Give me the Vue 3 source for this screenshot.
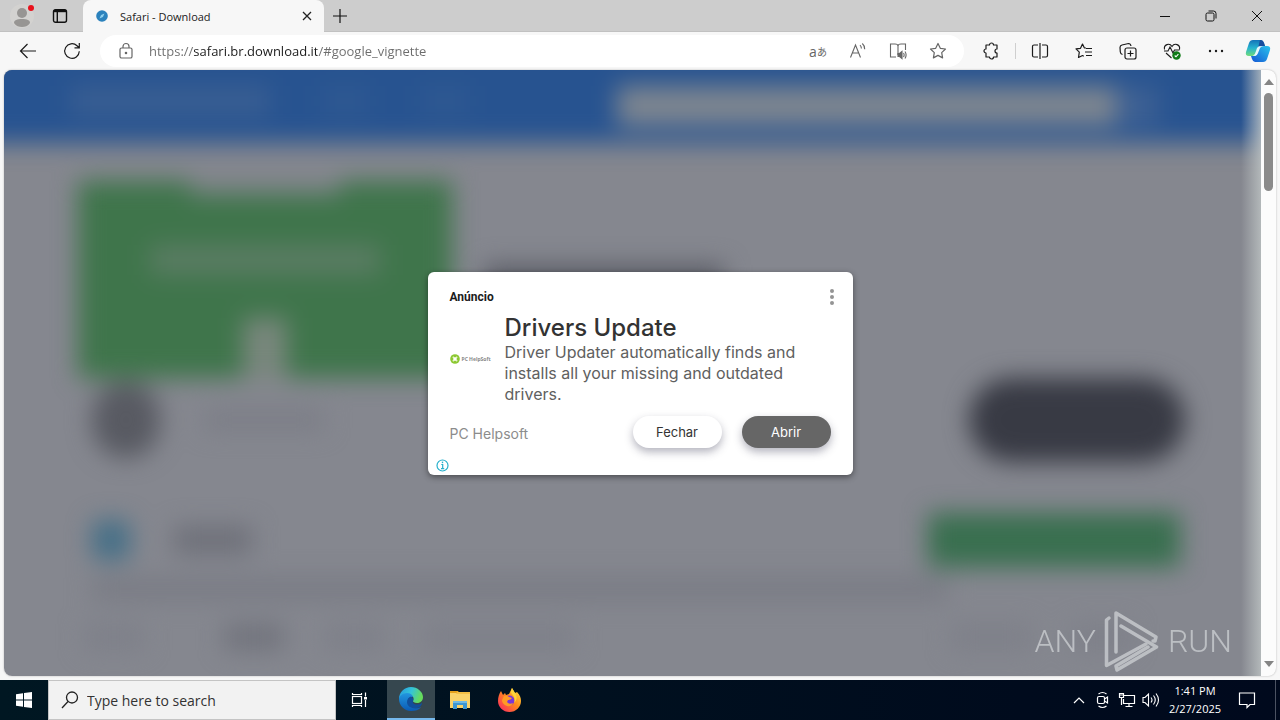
<script setup>
import { ref } from 'vue'

const url = ref('https://safari.br.download.it/#google_vignette')
const query = ref('')
</script>

<template>
  <div class="desktop">
    <header class="tabs">
      <button class="profile" aria-label="Profile">
        <svg width="30" height="30" viewBox="0 0 30 30"><circle cx="15" cy="15" r="12" fill="#d3d2d0" /><circle cx="15" cy="12" r="5" fill="#979593" /><path d="M7 22c0-3 3-4 8-4s8 1 8 4c-2 3-5 4-8 4s-6-1-8-4z" fill="#979593" /><circle cx="24" cy="7" r="3" fill="#e8111c" /></svg>
      </button>
      <button class="workspace" aria-label="Tab actions">
        <svg width="16" height="16" viewBox="0 0 16 16" fill="none" stroke="#111" stroke-width="1.4"><rect x="1.500" y="1.700" width="13" height="12.600" rx="2" /><path d="M2 3h12" stroke-width="2.400" /><path d="M5.300 4v10" /></svg>
      </button>
      <div class="tab">
        <svg width="12" height="12" viewBox="0 0 12 12"><circle cx="6" cy="6" r="5.800" fill="#2b82bd" /><path d="M3.500 8.500l1.600-3.400 3.400-1.600-1.600 3.400z" fill="#8fd0ee" /></svg>
        <span class="tab-title">Safari - Download</span>
        <button class="tab-close" aria-label="Close tab"><svg width="10" height="10" viewBox="0 0 10 10" stroke="#222" stroke-width="1.300"><path d="M1 1l8 8M9 1l-8 8" /></svg></button>
      </div>
      <button class="new-tab" aria-label="New tab"><svg width="16" height="16" viewBox="0 0 16 16" stroke="#111" stroke-width="1.200"><path d="M8 1v14M1 8h14" /></svg></button>
      <div class="window-controls">
        <button aria-label="Minimize"><svg width="12" height="12" viewBox="0 0 12 12" stroke="#111"><path d="M1 6.500h10" /></svg></button>
        <button aria-label="Restore"><svg width="12" height="12" viewBox="0 0 12 12" fill="none" stroke="#111"><rect x="1" y="3" width="8" height="8" rx="1.500" /><path d="M3.500 1h5A2.500 2.500 0 0 1 11 3.500v5" /></svg></button>
        <button aria-label="Close"><svg width="12" height="12" viewBox="0 0 12 12" stroke="#111"><path d="M1 1l10 10M11 1l-10 10" /></svg></button>
      </div>
    </header>

    <nav class="toolbar">
      <button class="tool" aria-label="Back"><svg width="20" height="20" viewBox="0 0 20 20" fill="none" stroke="#1b1b1b" stroke-width="1.200"><path d="M18 10H2.500M9.500 3l-7 7 7 7" /></svg></button>
      <button class="tool" aria-label="Refresh"><svg width="20" height="20" viewBox="0 0 20 20" fill="none" stroke="#1b1b1b" stroke-width="1.200"><path d="M17.300 10.300a7.300 7.300 0 1 1-2.300-5.600l2 1.900M17.300 2v4.800h-4.800" /></svg></button>
      <div class="address">
        <button class="lock" aria-label="Site information"><svg width="16" height="18" viewBox="0 0 16 18" fill="none" stroke="#666" stroke-width="1.200"><rect x="2" y="6" width="12" height="10" rx="1.600" /><path d="M5 6V4.500a3 3 0 0 1 6 0V6" /><circle cx="8" cy="11" r=".7" fill="#666" /></svg></button>
        <input v-model="url" class="url" type="text" aria-label="Address" spellcheck="false" />
        <button class="small-tool glyphs" aria-label="Translate"><span>a</span><span class="kana">あ</span></button>
        <button class="small-tool" aria-label="Read aloud"><svg width="18" height="18" viewBox="0 0 18 18" fill="none" stroke="#666" stroke-width="1.100"><path d="M1.500 15.500L6.500 3l5 12.500M3.300 11h6.500M11 3.200c1 .9 1.400 2 1.400 3.300M13.300 1.500c1.800 1.600 2.600 3.300 2.400 5.800" /></svg></button>
        <button class="small-tool" aria-label="Immersive reader"><svg width="18" height="18" viewBox="0 0 18 18" fill="none" stroke="#666" stroke-width="1.100"><path d="M7 15H1.500V2H6q3 0 3 2v9M9 4q0-2 3-2h4.500v6" /><path d="M9 11.500h1.500L13 9.500v7l-2.500-2H9z" fill="#666" /><path d="M14.500 11q1.300 2 0 4M16 9.500q2.200 3.500 0 7" /></svg></button>
        <button class="small-tool" aria-label="Favorite"><svg width="18" height="18" viewBox="0 0 18 18" fill="none" stroke="#666" stroke-width="1.200" stroke-linejoin="round"><path d="M9 1.500l2.300 4.800 5.200.7-3.800 3.600.9 5.300L9 13.400l-4.600 2.500.9-5.300L1.500 7l5.200-.7z" /></svg></button>
      </div>
      <button class="tool ext" aria-label="Extensions"><svg width="18" height="18" viewBox="0 0 18 18" fill="none" stroke="#1b1b1b" stroke-width="1.200" stroke-linejoin="round"><path d="M4 3h3.500a2 2 0 0 1 4 0H15v4a2 2 0 0 0 0 4v4h-3.500a2 2 0 0 1-4 0H4v-4a2 2 0 1 1 0-4z" /></svg></button>
      <span class="divider"></span>
      <button class="tool" aria-label="Split screen"><svg width="18" height="18" viewBox="0 0 18 18" fill="none" stroke="#1b1b1b" stroke-width="1.200"><path d="M9 1v16M7 3H3a1.500 1.500 0 0 0-1.500 1.500v9A1.500 1.500 0 0 0 3 15h4M11 3h4a1.500 1.500 0 0 1 1.500 1.500v9A1.500 1.500 0 0 1 15 15h-4" /></svg></button>
      <button class="tool" aria-label="Favorites"><svg width="18" height="18" viewBox="0 0 18 18" fill="none" stroke="#1b1b1b" stroke-width="1.200" stroke-linejoin="round"><path d="M11 6L9.300 5.800 7.500 2 5.500 6.300l-4.500.6 3.300 3.200-.8 5.400 4-2 1.300.7M11 6.500h6M10 10h7M11 13.500h6" /></svg></button>
      <button class="tool" aria-label="Collections"><svg width="18" height="18" viewBox="0 0 18 18" fill="none" stroke="#1b1b1b" stroke-width="1.200"><path d="M3.500 12.500Q1.500 12 1.300 10L1 5.500Q1 3.500 3 3l6.500-1.500q2 0 2.500 2.500" /><rect x="6" y="6" width="11" height="11" rx="2" /><path d="M11.500 8.500v6M8.500 11.500h6" /></svg></button>
      <button class="tool" aria-label="Browser essentials"><svg width="18" height="18" viewBox="0 0 18 18" fill="none" stroke="#1b1b1b" stroke-width="1.100"><path d="M1.500 7.500c-1-5 5-7 7.500-3 2.500-4 8.500-2 7.500 3M3 11l5.500 5M1 9h4l2-4 3 6 1.500-3h5" /><circle cx="13.500" cy="13.500" r="4.200" fill="#0f7b16" stroke="none" /><path d="M11.700 13.500l1.300 1.300 2.400-2.600" stroke="#fff" /></svg></button>
      <button class="tool" aria-label="More"><svg width="18" height="18" viewBox="0 0 18 18" fill="#1b1b1b"><circle cx="3" cy="9" r="1.200" /><circle cx="9" cy="9" r="1.200" /><circle cx="15" cy="9" r="1.200" /></svg></button>
      <button class="copilot" aria-label="Copilot">
        <svg width="26" height="24" viewBox="0 0 26 24">
          <defs><linearGradient id="cpA" x1="0" y1="0" x2="0" y2="1"><stop offset="0" stop-color="#1473b8" /><stop offset=".5" stop-color="#26b3d0" /><stop offset="1" stop-color="#70dc7a" /></linearGradient><linearGradient id="cpB" x1="1" y1="0" x2="0" y2="1"><stop offset="0" stop-color="#29c4ed" /><stop offset="1" stop-color="#1557d4" /></linearGradient></defs>
          <path d="M8 1h8q2 0 3 3l1 3h-4q-2 0-3 3l-2 5q-1 2-4 2H4q-4 0-3-4L4 4q1-3 4-3z" fill="url(#cpA)" />
          <path d="M18 23h-8q-2 0-3-3l-1-3h4q2 0 3-3l2-5q1-2 4-2h3q4 0 3 4l-3 9q-1 3-4 3z" fill="url(#cpB)" />
          <path d="M15 1q3 0 4 3l1 3h-4q-2 0-3 2z" fill="#174d9e" />
          <path d="M12 9q1-2 4-2-2 1-3 5l-1 3q-1 2-4 2 2-1 3-5z" fill="#e5faff" />
        </svg>
      </button>
    </nav>

    <main class="viewport">
      <div class="page">
        <div class="site">
          <div class="site-head"><span class="brand"></span><span class="menu"></span><span class="menu"></span><span class="site-search"></span><span class="submit"></span></div>
          <div class="hero">
            <div class="banner"><span class="banner-top"></span><span class="banner-text"></span><span class="banner-arrow"></span></div>
            <div class="headline"></div>
          </div>
          <div class="promo"><span class="avatar"></span><span class="caption"></span><span class="pill"></span></div>
          <div class="product"><span class="app-icon"></span><span class="app-name"></span><span class="get"></span></div>
          <div class="summary"></div>
          <div class="facts"><span></span><span class="strong"></span><span></span><span class="wide"></span><span class="push"></span><span></span></div>
        </div>
      </div>
      <div class="scroll">
        <svg width="10" height="6" viewBox="0 0 10 6"><path d="M5 0l5 6H0z" fill="#858585" /></svg>
        <span class="thumb"></span>
        <svg width="10" height="6" viewBox="0 0 10 6"><path d="M5 6L0 0h10z" fill="#858585" /></svg>
      </div>

      <div class="vignette">
        <article class="ad">
          <div class="ad-top">
            <span>Anúncio</span>
            <button class="ad-menu" aria-label="Ad options"><svg width="6" height="16" viewBox="0 0 6 16" fill="#949494"><circle cx="3" cy="2" r="2" /><circle cx="3" cy="8" r="2" /><circle cx="3" cy="14" r="2" /></svg></button>
          </div>
          <div class="ad-body">
            <div class="ad-logo"><svg width="10" height="10" viewBox="0 0 10 10"><circle cx="5" cy="5" r="4.800" fill="#8cc832" /><path d="M2.800 2.800l4.400 4.400M7.200 2.800L2.800 7.200" stroke="#e6f5c8" stroke-width="1.500" /><circle cx="5" cy="5" r="1.700" fill="#fff" /></svg><span>PC HelpSoft</span></div>
            <div>
              <h1>Drivers Update</h1>
              <p>Driver Updater automatically finds and installs all your missing and outdated drivers.</p>
            </div>
          </div>
          <div class="ad-foot">
            <span class="advertiser">PC Helpsoft</span>
            <button class="action">Fechar</button>
            <button class="action open">Abrir</button>
          </div>
          <button class="info" aria-label="Why this ad"><svg width="13" height="13" viewBox="0 0 13 13" fill="none" stroke="#27b0cc" stroke-width="1.200"><circle cx="6.500" cy="6.500" r="5.500" /><path d="M5.300 5.500h1.400v4M5 9.700h3.200" /><path d="M5.800 3.400h1.400" stroke-width="1.500" /></svg></button>
        </article>
      </div>

      <div class="watermark">
        <span>ANY</span>
        <svg width="56" height="62" viewBox="0 0 56 62" fill="none" stroke="#c6c9cd" stroke-width="3.500" stroke-linejoin="round" stroke-linecap="round"><path d="M5 8L2.500 10v45.500L42 34" /><path d="M12 42V3l40 24-1 4h-2" /><path d="M17 16l35.500 21L13 60l-1-4 32-19" /></svg>
        <span>RUN</span>
      </div>
    </main>

    <footer class="taskbar">
      <button class="start" aria-label="Start"><svg width="16" height="16" viewBox="0 0 16 16" fill="#fff"><path d="M0 2.200l7-1v6.300H0zM8 1l8-1v7.500H8zM0 8.500h7v6.300l-7-1zM8 8.500h8V16l-8-1z" /></svg></button>
      <label class="search">
        <svg width="18" height="18" viewBox="0 0 18 18" fill="none" stroke="#222" stroke-width="1.300"><circle cx="11" cy="6.500" r="5.500" /><path d="M7 10.500l-6 6.500" /></svg>
        <input v-model="query" type="text" placeholder="Type here to search" aria-label="Type here to search" />
      </label>
      <button class="app view" aria-label="Task View"><svg width="18" height="18" viewBox="0 0 18 18" fill="none" stroke="#fff" stroke-width="1.200"><path d="M1.500 2v1.500h9V2M1.500 16v-1.500h9V16M14.500 1.500v4M14.500 9v7" /><rect x="1.500" y="5.500" width="9" height="7" /><path d="M13 6h3v2.500h-3z" fill="#fff" stroke="none" /></svg></button>
      <button class="app active" aria-label="Microsoft Edge">
        <svg width="24" height="24" viewBox="0 0 24 24">
          <defs><linearGradient id="edA" x1="0" y1="0" x2="1" y2=".3"><stop offset="0" stop-color="#2497df" /><stop offset=".55" stop-color="#35c4d8" /><stop offset="1" stop-color="#66dc5c" /></linearGradient><linearGradient id="edB" x1="0" y1="0" x2="0" y2="1"><stop offset="0" stop-color="#2296df" /><stop offset="1" stop-color="#0b5bb5" /></linearGradient></defs>
          <path d="M0 12C0 5 5.500 0 12 0s12 5 12 10c0 4-3 6-6 6-3 0-4.500-1-4-2 1.500-2 .5-6-4-6-5 0-9 3-10 4z" fill="url(#edA)" />
          <path d="M0 12c0-3 4-6 8-6 3 0 5.500 1.500 6 4-6-1-8 8 1 11 3 .8 5 0 7-1-2 3-6 4-10 4C5 24 0 18 0 12z" fill="url(#edB)" />
          <path d="M8 15c0-3 2-5 4-5.500 2 1 2.500 3 2 4.500-.8 1.500 1 3 4 3 2 0 4-.7 5-1.500.5 1-1 4-3 5-5 2-12 0-12-5.500z" fill="#114f9c" />
          <path d="M14.300 13.500c-.8 1.500 1 2.600 4 2.600 2 0 4-.7 5-1.700-.2 1.600-2 3.100-5 3.100-4 0-5-2-4-4z" fill="#36474f" />
        </svg>
      </button>
      <button class="app" aria-label="File Explorer"><svg width="22" height="20" viewBox="0 0 22 20"><path d="M1 1h8l2 3H1z" fill="#e7a21b" /><rect x="1" y="3" width="20" height="15" fill="#fad36a" /><path d="M8 2h13v2H7z" fill="#f3bf45" /><path d="M4 19v-8h14v8h-4v-4H8v4z" fill="#3d96d3" /><path d="M4 11h14v2H4z" fill="#70b9e4" /></svg></button>
      <button class="app" aria-label="Firefox">
        <svg width="24" height="24" viewBox="0 0 24 24">
          <defs><linearGradient id="ffA" x1="1" y1="0" x2="0" y2="1"><stop offset="0" stop-color="#ffe83d" /><stop offset=".45" stop-color="#ff8a1c" /><stop offset="1" stop-color="#fa1e68" /></linearGradient></defs>
          <path d="M4 3l2 4 2-2 1 2 3-1 3-6 3 5 2-1c3 3 4 6 4 9 0 6-5 11-11.500 11S1 19 1 13c0-4 1-7 3-10z" fill="url(#ffA)" />
          <circle cx="12.500" cy="12.500" r="5" fill="#7b36d8" /><path d="M7 8q3-1 5 1l3 1q-1 2-4 2l-1 2q2 3 6 1-2 4-6 3-5-2-5-6z" fill="#ff9b25" /><path d="M15 0q-2 4 0 6 4 4 2 9 4-3 2-9l-1-1z" fill="#ffd43a" />
        </svg>
      </button>
      <div class="tray">
        <button aria-label="Hidden icons"><svg width="12" height="8" viewBox="0 0 12 8" fill="none" stroke="#fff" stroke-width="1.200"><path d="M1 7l5-5 5 5" /></svg></button>
        <button aria-label="Meet now"><svg width="14" height="18" viewBox="0 0 14 18" fill="none" stroke="#fff" stroke-width="1.200"><rect x="1.500" y="5.500" width="7" height="7" rx="1.500" /><path d="M8.500 8l3-2v6l-3-2M2.500 3q4-3 8 0M2.500 15q4 3 8 0" /></svg></button>
        <button aria-label="Network"><svg width="18" height="16" viewBox="0 0 18 16" fill="none" stroke="#fff" stroke-width="1.200"><path d="M6 3.500h10.500v8H5.500V7M11 11.500V15M7.500 14.500h7" /><path d="M1.500 1.500h4v4h-4zM3.500 5.500V13M1.500 3h4" /></svg></button>
        <button aria-label="Volume"><svg width="18" height="16" viewBox="0 0 18 16" fill="none" stroke="#fff" stroke-width="1.100"><path d="M1 5.500h2L6.500 2v12L3 10.500H1zM9 5.500q2 2.500 0 5M11.500 3.500q3.500 4.500 0 9M14 1.500q5 6.500 0 13" /></svg></button>
      </div>
      <div class="clock"><span>1:41 PM</span><span>2/27/2025</span></div>
      <button class="notify" aria-label="Notifications"><svg width="18" height="18" viewBox="0 0 18 18" fill="none" stroke="#fff" stroke-width="1.200"><path d="M1.500 2h15v11.500H12l-3 3v-3H1.500z" /></svg></button>
      <span class="show-desktop"></span>
    </footer>
  </div>
</template>

<style>
body { margin: 0; }
</style>

<style scoped>
* { box-sizing: border-box; }
button { border: 0; padding: 0; background: none; font: inherit; color: inherit; display: flex; align-items: center; justify-content: center; flex-shrink: 0; }
input { border: 0; padding: 0; outline: 0; background: none; font: inherit; min-width: 0; }
svg { display: block; flex-shrink: 0; }
.desktop { height: 100vh; display: flex; flex-direction: column; background: #f7f7f7; font-family: "Open Sans", "Noto Sans", sans-serif; overflow: hidden; }

.tabs { height: 32px; flex-shrink: 0; display: flex; background: #cdcdcd; padding-left: 4px; border-bottom: 1px solid #c1c1c1; }
.profile { width: 36px; }
.workspace { width: 40px; }
.tab { width: 241px; height: 32px; margin-left: 3px; padding: 0 10px 0 13px; background: #f7f7f7; border-radius: 8px 8px 0 0; display: flex; align-items: center; font-size: 12px; color: #222; }
.tab-title { flex: 1; margin-left: 12px; font-family: "Open Sans", sans-serif; font-size: 11px; }
.tab-close { width: 14px; height: 20px; }
.new-tab { width: 32px; }
.window-controls { margin-left: auto; display: flex; }
.window-controls button { width: 46px; }

.toolbar { height: 38px; flex-shrink: 0; display: flex; align-items: center; padding: 0 2px 0 6px; }
.tool { width: 44px; height: 32px; }
.ext { margin-left: 5px; }
.divider { width: 1px; height: 16px; margin: 0 2px; background: #cfcfcf; }
.copilot { width: 40px; }
.address { flex: 1; height: 32px; margin-left: 6px; padding: 0 6px 0 10px; display: flex; align-items: center; background: #fff; border-radius: 16px; }
.lock { width: 32px; height: 28px; margin-right: 7px; }
.url { flex: 1; height: 24px; font-size: 13px; color: transparent; background: linear-gradient(90deg, #6c6c6c 45px, #1b1b1b 45px, #1b1b1b 168px, #6c6c6c 168px); background-clip: text; -webkit-background-clip: text; }
.small-tool { width: 40px; height: 28px; }
.glyphs { color: #666; font-size: 14px; }
.kana { font-family: "Noto Sans CJK JP", sans-serif; font-size: 10px; }

.viewport { flex: 1; min-height: 0; margin: 0 4px 4px; position: relative; display: flex; border-radius: 8px; overflow: hidden; background: #fcfcfc; box-shadow: 0 0 2px #b0b0b0; }
.page { flex: 1; min-width: 0; overflow: hidden; position: relative; background: #85878f; }
.page::after { content: ""; position: absolute; inset: 0 0 0 auto; width: 20px; background: linear-gradient(90deg, rgba(190, 196, 196, 0), rgba(190, 196, 196, .8)); }
.site { margin: -40px -40px 0; filter: blur(12px); }
.site-head { height: 113px; padding: 56px 142px 0 106px; display: flex; gap: 50px; background: #275390; }
.brand { width: 200px; height: 30px; background: #395e92; }
.menu { width: 50px; height: 30px; background: #2e5891; }
.site-search { width: 500px; height: 40px; margin-left: auto; background: #7e8690; }
.submit { width: 40px; height: 40px; margin-left: -48px; background: #3d6093; }
.hero { display: flex; padding: 38px 114px 0; gap: 32px; }
.banner { width: 374px; height: 197px; background: #3f754b; display: flex; flex-direction: column; align-items: center; justify-content: space-between; }
.banner-top { width: 150px; height: 14px; background: #7c8486; }
.banner-text { width: 230px; height: 30px; margin-top: 6px; background: #5a7c63; }
.banner-arrow { width: 44px; height: 60px; background: #79877d; }
.headline { width: 240px; height: 34px; margin-top: 84px; background: #5c5e67; }
.promo { display: flex; align-items: center; height: 84px; margin: 0 116px 0 128px; }
.avatar { width: 68px; height: 76px; border-radius: 38px; background: #585a62; }
.caption { width: 120px; height: 20px; margin-left: 44px; background: #7b7d86; }
.pill { width: 216px; height: 84px; margin-left: auto; border-radius: 42px; background: #383a44; }
.product { display: flex; align-items: center; height: 54px; margin: 51px 121px 0 128px; }
.app-icon { width: 38px; height: 40px; border-radius: 8px; background: #456f87; }
.app-name { width: 78px; height: 28px; margin-left: 44px; background: #6e7079; }
.get { width: 252px; height: 54px; margin-left: auto; background: #396f4f; }
.summary { width: 856px; height: 22px; margin: 11px 0 0 128px; background: #797b84; }
.facts { display: flex; gap: 40px; height: 26px; margin: 24px 170px 0 120px; }
.facts span { width: 60px; background: #7e8089; }
.facts .strong { width: 60px; background: #71737c; margin-left: 40px; }
.facts .wide { width: 150px; }
.facts .push { width: 80px; margin-left: auto; }

.scroll { width: 15px; flex-shrink: 0; padding: 9px 0; display: flex; flex-direction: column; align-items: center; }
.thumb { width: 9px; height: 98px; margin: 8px 0 auto; border-radius: 5px; background: #8b8b8b; }

.vignette { position: absolute; inset: 0; display: grid; place-items: center; }
.ad { width: 425px; padding: 17px 22px 3px; border-radius: 6px; background: #fff; box-shadow: 0 2px 6px rgba(0, 0, 0, .45); }
.ad-top { display: flex; justify-content: space-between; align-items: center; height: 16px; font: 700 12px/16px Roboto, sans-serif; color: #1b1b1b; }
.ad-menu { margin-right: -4px; width: 6px; height: 16px; }
.ad-body { display: flex; align-items: center; gap: 15px; margin-top: 9px; }
.ad-logo { width: 40px; flex-shrink: 0; display: flex; align-items: center; gap: 2px; white-space: nowrap; font: 700 5px/8px "Open Sans", sans-serif; color: #888; }
h1 { margin: 0; font: 500 24px/28px Inter, sans-serif; color: #333; }
p { margin: 0; font: 400 16px/21px Inter, sans-serif; color: #606060; }
.ad-foot { display: flex; align-items: center; gap: 20px; margin-top: 11px; }
.advertiser { flex: 1; padding-top: 4px; font: 400 14px/20px Inter, sans-serif; color: #8c8c8c; }
.action { width: 89px; height: 32px; border-radius: 16px; background: #fff; color: #333; font: 400 13px/16px Inter, sans-serif; box-shadow: 0 4px 8px rgba(40, 40, 70, .35); }
.open { background: #666; color: #fff; }
.info { width: 13px; height: 13px; margin: 11px 0 0 -14px; }

.watermark { position: absolute; right: 44px; bottom: 4px; display: flex; align-items: center; gap: 8px; color: #c6c9cd; font: 300 32px/40px Roboto, sans-serif; opacity: .85; }

.taskbar { height: 40px; flex-shrink: 0; display: flex; align-items: stretch; color: #fff; background: linear-gradient(90deg, #001722, #000b1d 80%, #00091d); }
.start { width: 48px; }
.search { width: 288px; padding-left: 12px; display: flex; align-items: center; gap: 8px; background: #f2f2f2; border: 1px solid #c4c4c4; }
.search input { flex: 1; height: 28px; font-size: 14px; color: #333; }
.search input::placeholder { color: #333; opacity: 1; }
.app { width: 48px; margin-right: 1px; }
.view { margin-right: 3px; }
.active { background: #36474f; border-bottom: 2px solid #76b9ed; }
.tray { margin-left: auto; display: flex; }
.tray button { width: 24px; }
.clock { width: 64px; display: flex; flex-direction: column; align-items: center; justify-content: center; font-size: 11px; line-height: 18px; }
.notify { width: 40px; }
.show-desktop { width: 5px; margin-left: 8px; border-left: 1px solid #4b5262; }
</style>
